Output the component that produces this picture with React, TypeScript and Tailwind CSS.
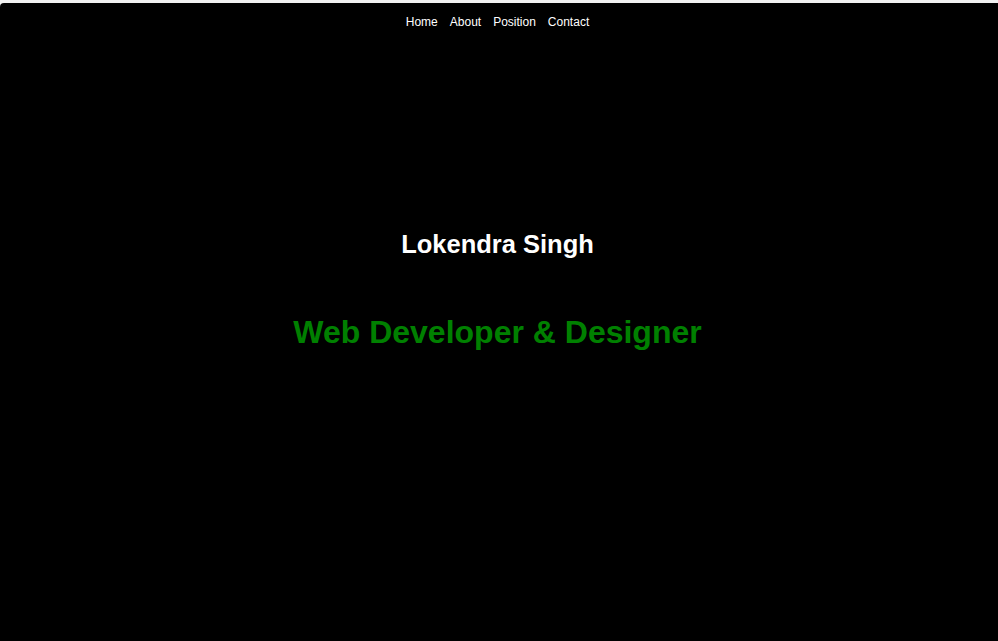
export default function App() {
  const links = ['Home', 'About', 'Position', 'Contact']

  return (
    <div className="min-h-screen bg-[#f1f1f1] pt-[3px] font-['Liberation_Sans',Arial,sans-serif]">
      <section className="h-[638px] bg-black rounded-tl-[4px] pr-[3px] flex flex-col items-center">
        {/* Nav */}
        <nav className="pt-[12px] flex gap-3 text-[12px] leading-[14px] text-white">
          {links.map((link) => (
            <a key={link} href={'#' + link.toLowerCase()}>
              {link}
            </a>
          ))}
        </nav>

        {/* Hero */}
        <h1 className="mt-[200px] text-[25.5px] leading-[30px] font-bold text-white">
          Lokendra Singh
        </h1>
        <h2 className="mt-[55px] text-[32px] leading-[37px] font-bold text-[#008000]">
          Web Developer &amp; Designer
        </h2>
      </section>
    </div>
  )
}
